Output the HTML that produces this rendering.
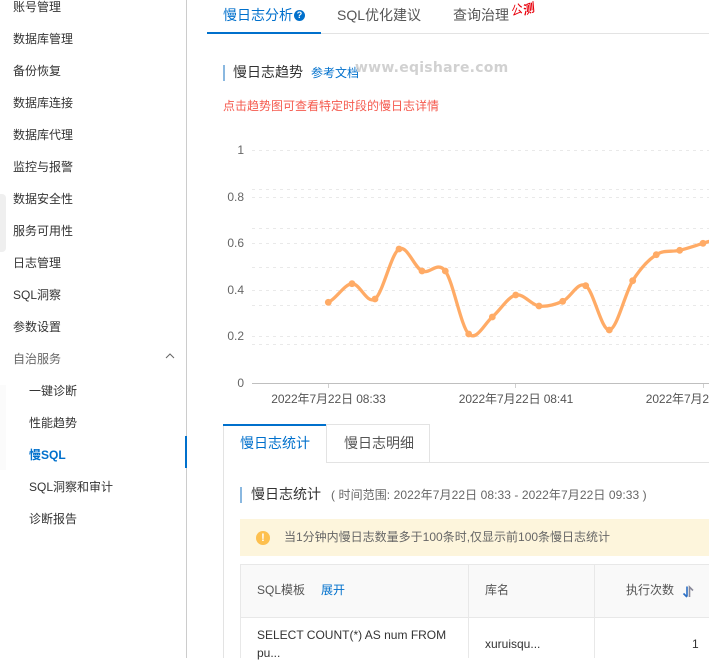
<!DOCTYPE html>
<html lang="zh-CN">
<head>
<meta charset="utf-8">
<title>慢SQL</title>
<style>
html,body{margin:0;padding:0;background:#fff;}
body{width:709px;height:658px;position:relative;overflow:hidden;font-family:"Liberation Sans","Noto Sans CJK SC",sans-serif;font-size:12px;color:#333;}
.a{position:absolute;white-space:nowrap;line-height:16px;}
.n{left:13px;color:#333;}
.s{left:29px;color:#333;}
.b{position:absolute;}
.y{position:absolute;width:30px;left:214px;text-align:right;color:#666;line-height:16px;}
.x{position:absolute;width:160px;text-align:center;color:#555;line-height:16px;white-space:nowrap;letter-spacing:-.1px;}
</style>
</head>
<body>
<!-- sidebar faint shapes -->
<div class="b" style="left:0;top:194px;width:6px;height:58px;background:#efefef;border-radius:0 4px 4px 0;"></div>
<div class="b" style="left:0;top:385px;width:6px;height:85px;background:#fbfbfb;"></div>
<div class="b" style="left:186px;top:0;width:1px;height:658px;background:#cccccc;"></div>
<div class="b" style="left:185px;top:436px;width:2px;height:32px;background:#0070cc;"></div>

<div class="a n" style="top:-1px;">账号管理</div>
<div class="a n" style="top:31px;">数据库管理</div>
<div class="a n" style="top:63px;">备份恢复</div>
<div class="a n" style="top:95px;">数据库连接</div>
<div class="a n" style="top:127px;">数据库代理</div>
<div class="a n" style="top:159px;">监控与报警</div>
<div class="a n" style="top:191px;">数据安全性</div>
<div class="a n" style="top:223px;">服务可用性</div>
<div class="a n" style="top:255px;">日志管理</div>
<div class="a n" style="top:287px;">SQL洞察</div>
<div class="a n" style="top:319px;">参数设置</div>
<div class="a n" style="top:351px;color:#666;">自治服务</div>
<svg class="b" style="left:165px;top:352px;" width="10" height="8" viewBox="0 0 10 8"><path d="M1 6 L5 2 L9 6" fill="none" stroke="#666" stroke-width="1"/></svg>
<div class="a s" style="top:383px;">一键诊断</div>
<div class="a s" style="top:415px;">性能趋势</div>
<div class="a s" style="top:447px;color:#0070cc;font-weight:bold;">慢SQL</div>
<div class="a s" style="top:479px;">SQL洞察和审计</div>
<div class="a s" style="top:511px;">诊断报告</div>

<!-- top tabs -->
<div class="b" style="left:207px;top:33px;width:502px;height:1px;background:#e3e3e3;"></div>
<div class="b" style="left:207px;top:32px;width:114px;height:2px;background:#0070cc;"></div>
<div class="a" style="left:223px;top:6px;font-size:14px;line-height:18px;color:#0070cc;">慢日志分析</div>
<div class="b" style="left:294px;top:10px;width:11px;height:11px;border-radius:50%;background:#0070cc;color:#fff;font-size:9px;line-height:11px;text-align:center;font-weight:bold;">?</div>
<div class="a" style="left:337px;top:6px;font-size:14px;line-height:18px;color:#555;">SQL优化建议</div>
<div class="a" style="left:453px;top:6px;font-size:14px;line-height:18px;color:#555;">查询治理</div>
<div class="a" style="left:511px;top:4px;font-size:12px;line-height:12px;color:#e8000b;transform:rotate(-20deg) skewX(-15deg);">公</div>
<div class="a" style="left:523px;top:3px;font-size:12px;line-height:12px;color:#e8000b;font-weight:bold;transform:rotate(-20deg) skewX(-15deg);">测</div>

<!-- trend header -->
<div class="b" style="left:223px;top:65px;width:2px;height:16px;background:#8ab8e0;"></div>
<div class="a" style="left:233px;top:63px;font-size:14px;line-height:18px;color:#333;">慢日志趋势</div>
<div class="a" style="left:311px;top:65px;color:#0070cc;">参考文档</div>
<div class="a" style="left:355px;top:59px;font-family:'DejaVu Sans',sans-serif;font-size:14px;line-height:18px;font-weight:bold;color:#c9c9c9;letter-spacing:.25px;opacity:.85;">www.eqishare.com</div>
<div class="a" style="left:223px;top:98px;color:#f55a4e;">点击趋势图可查看特定时段的慢日志详情</div>

<!-- chart -->
<svg class="b" style="left:0;top:0;" width="709" height="420" viewBox="0 0 709 420">
  <g stroke="#e9e9e9" stroke-width="1" stroke-dasharray="3 4" fill="none">
    <path d="M252 150.5H709"/>
    <path d="M252 189.5H709"/>
    <path d="M252 197.5H709"/>
    <path d="M252 228.5H709"/>
    <path d="M252 243.5H709"/>
    <path d="M252 267.5H709"/>
    <path d="M252 290.5H709"/>
    <path d="M252 305.5H709"/>
    <path d="M252 336.5H709"/>
    <path d="M252 344.5H709"/>
  </g>
  <path d="M252 383.5H709" stroke="#bfbfbf" stroke-width="1" fill="none"/>
  <path d="M328.5 384V388M515.5 384V388M703.5 384V388" stroke="#d0d0d0" stroke-width="1" fill="none"/>
  <path fill="none" stroke="#ffab66" stroke-width="3.3" stroke-linecap="round" d="M328.3 302.3C336.1 299.2 344.2 284.25 352 283.7C359.8 283.15 367.2 304.8 375 299C382.8 293.2 391.2 253.67 399 249C406.8 244.33 414.3 267.33 422 271C429.7 274.67 437.5 260.5 445.3 271C453.1 281.5 460.9 326.33 468.7 334C476.5 341.67 484.5 323.5 492.3 317C500.1 310.5 507.9 296.83 515.7 295C523.5 293.17 531.2 304.95 539 306C546.8 307.05 554.9 304.68 562.7 301.3C570.5 297.92 577.9 280.92 585.7 285.7C593.5 290.48 601.5 330.83 609.3 330C617.1 329.17 624.9 293.25 632.7 280.7C640.5 268.15 648.5 259.77 656.3 254.7C664.1 249.63 671.9 252.2 679.7 250.3C687.5 248.4 695.2 245.7 703 243.3C706 242.4 708 241.7 709 241.4"/>
  <g fill="#ffab66">
    <circle cx="328.3" cy="302.3" r="3.4"/><circle cx="352" cy="283.7" r="3.4"/><circle cx="375" cy="299" r="3.4"/><circle cx="399" cy="249" r="3.4"/><circle cx="422" cy="271" r="3.4"/><circle cx="445.3" cy="271" r="3.4"/><circle cx="468.7" cy="334" r="3.4"/><circle cx="492.3" cy="317" r="3.4"/><circle cx="515.7" cy="295" r="3.4"/><circle cx="539" cy="306" r="3.4"/><circle cx="562.7" cy="301.3" r="3.4"/><circle cx="585.7" cy="285.7" r="3.4"/><circle cx="609.3" cy="330" r="3.4"/><circle cx="632.7" cy="280.7" r="3.4"/><circle cx="656.3" cy="254.7" r="3.4"/><circle cx="679.7" cy="250.3" r="3.4"/><circle cx="703" cy="243.3" r="3.4"/>
  </g>
</svg>
<div class="y" style="top:142px;">1</div>
<div class="y" style="top:189px;">0.8</div>
<div class="y" style="top:235px;">0.6</div>
<div class="y" style="top:282px;">0.4</div>
<div class="y" style="top:328px;">0.2</div>
<div class="y" style="top:375px;">0</div>
<div class="x" style="left:248.5px;top:391px;">2022年7月22日 08:33</div>
<div class="x" style="left:436px;top:391px;">2022年7月22日 08:41</div>
<div class="b" style="left:623px;top:385px;width:86px;height:24px;overflow:hidden;"><div class="x" style="left:0;top:6px;">2022年7月22日 08:49</div></div>

<!-- sub tabs -->
<div class="b" style="left:326px;top:462px;width:383px;height:1px;background:#e3e3e3;"></div>
<div class="b" style="left:223px;top:424px;width:1px;height:234px;background:#e3e3e3;"></div>
<div class="b" style="left:223px;top:424px;width:103px;height:2px;background:#0070cc;"></div>
<div class="b" style="left:326px;top:424px;width:102px;height:37px;border:1px solid #e3e3e3;border-top-width:1px;"></div>
<div class="a" style="left:240px;top:434px;font-size:14px;line-height:18px;color:#0070cc;">慢日志统计</div>
<div class="a" style="left:344px;top:434px;font-size:14px;line-height:18px;color:#555;">慢日志明细</div>

<div class="b" style="left:240px;top:487px;width:2px;height:16px;background:#8ab8e0;"></div>
<div class="a" style="left:251px;top:485px;font-size:14px;line-height:18px;color:#333;">慢日志统计</div>
<div class="a" style="left:331px;top:487px;color:#666;letter-spacing:.08px;">( 时间范围: 2022年7月22日 08:33 - 2022年7月22日 09:33 )</div>

<!-- alert -->
<div class="b" style="left:240px;top:519px;width:469px;height:37px;background:#fdf5dc;"></div>
<div class="b" style="left:256px;top:531px;width:14px;height:14px;border-radius:50%;background:#fdc04f;color:#fff;font-size:11px;line-height:14px;text-align:center;font-weight:bold;">!</div>
<div class="a" style="left:284px;top:529px;color:#666;">当1分钟内慢日志数量多于100条时,仅显示前100条慢日志统计</div>

<!-- table -->
<div class="b" style="left:240px;top:564px;width:469px;height:53px;background:#f9f9f9;"></div>
<div class="b" style="left:240px;top:564px;width:469px;height:1px;background:#e8e8e8;"></div>
<div class="b" style="left:240px;top:617px;width:469px;height:1px;background:#e8e8e8;"></div>
<div class="b" style="left:240px;top:564px;width:1px;height:94px;background:#e8e8e8;"></div>
<div class="b" style="left:468px;top:564px;width:1px;height:94px;background:#e8e8e8;"></div>
<div class="b" style="left:594px;top:564px;width:1px;height:94px;background:#e8e8e8;"></div>
<div class="a" style="left:257px;top:582px;color:#555;">SQL模板</div>
<div class="a" style="left:321px;top:582px;color:#0070cc;">展开</div>
<div class="a" style="left:485px;top:582px;color:#555;">库名</div>
<div class="a" style="left:626px;top:582px;color:#555;">执行次数</div>
<svg class="b" style="left:682px;top:584px;" width="12" height="14" viewBox="0 0 12 14"><path d="M5 2.5V12.5M1.5 9.5L5 13" fill="none" stroke="#2b6fc4" stroke-width="1.6"/><path d="M7.5 13V3L11 6.5" fill="none" stroke="#8a8a9a" stroke-width="1.6"/></svg>
<div class="a" style="left:257px;top:627px;color:#333;">SELECT COUNT(*) AS num FROM</div>
<div class="a" style="left:257px;top:645px;color:#333;">pu...</div>
<div class="a" style="left:485px;top:636px;color:#333;">xuruisqu...</div>
<div class="a" style="left:692px;top:636px;color:#333;">1</div>
</body>
</html>
